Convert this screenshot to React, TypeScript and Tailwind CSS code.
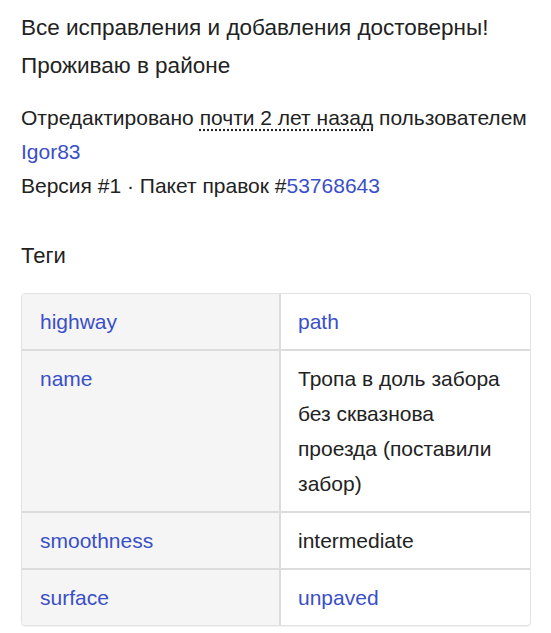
import React from 'react';

interface Tag {
  k: string;
  v: string;
  link?: boolean;
}

const tags: Tag[] = [
  { k: 'highway', v: 'path', link: true },
  { k: 'name', v: 'Тропа в доль забора без сквазнова проезда (поставили забор)' },
  { k: 'smoothness', v: 'intermediate' },
  { k: 'surface', v: 'unpaved', link: true },
];

export default function App() {
  return (
    <div className="min-h-screen bg-white px-[21px] pt-[9px] text-[#222] font-['Liberation_Sans',Arial,sans-serif]">
      <p className="text-[22.5px] leading-[38px]">
        Все исправления и добавления достоверны!
        <br />
        Проживаю в районе
      </p>

      <div className="mt-[16px] text-[21px] leading-[34px]">
        <div>
          Отредактировано{' '}
          <span className="underline decoration-dotted underline-offset-4">почти 2 лет назад</span>{' '}
          пользователем
        </div>
        <div>
          <a className="text-[#3a4fc8]">Igor83</a>
        </div>
        <div>
          Версия #1 · Пакет правок #<a className="text-[#3a4fc8]">53768643</a>
        </div>
      </div>

      <h4 className="mt-[38px] text-[22px] leading-[30px]">Теги</h4>

      <div className="mt-[22px] w-[510px] overflow-hidden rounded-[4px] border border-[#e2e2e2] text-[21px] leading-[35px] shadow-[0_1px_1px_rgba(0,0,0,0.06)]">
        {tags.map((t, i) => (
          <div
            key={t.k}
            className={`grid grid-cols-[257px_1fr] ${i > 0 ? 'border-t-2 border-[#dcdcdc]' : ''}`}
          >
            <div className="bg-[#f5f5f5] py-[10px] pl-[18px] pr-3 text-[#3a4fc8]">{t.k}</div>
            <div
              className={`border-l-2 border-[#dcdcdc] py-[10px] pl-[17px] pr-[20px] ${
                t.link ? 'text-[#3a4fc8]' : ''
              }`}
            >
              {t.v}
            </div>
          </div>
        ))}
      </div>
    </div>
  );
}
